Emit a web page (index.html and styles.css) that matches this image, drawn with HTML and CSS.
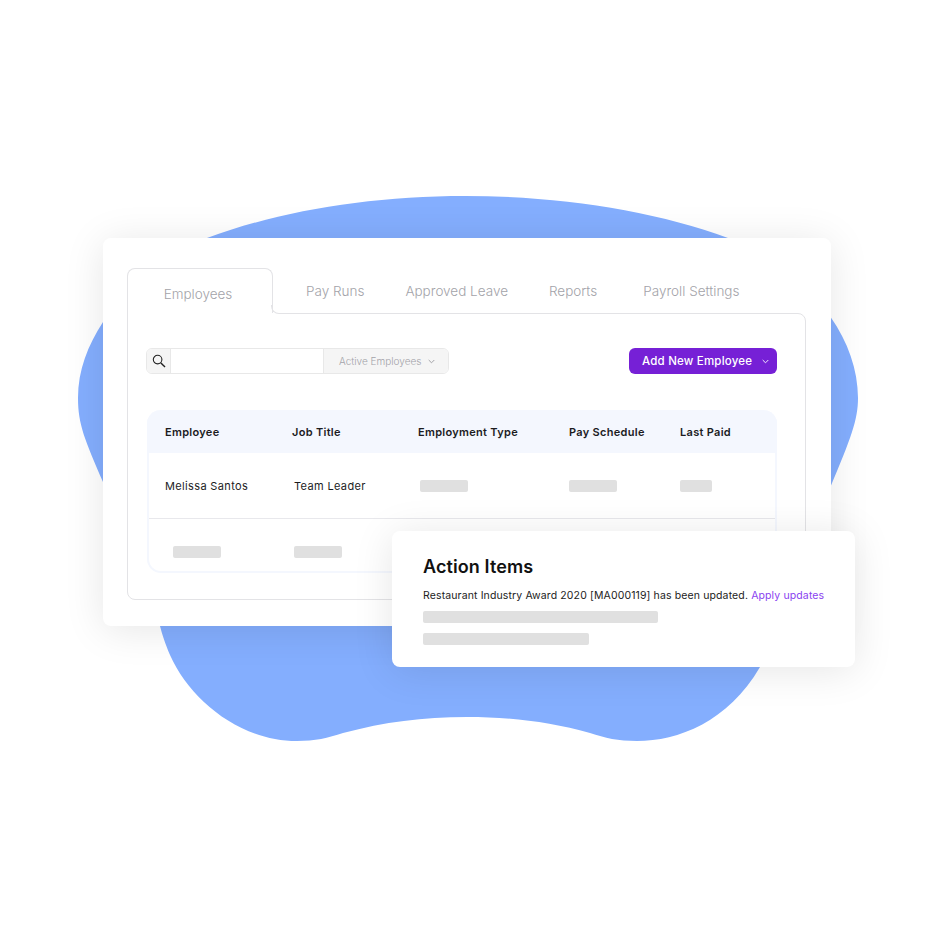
FILE: index.html
```html
<!DOCTYPE html>
<html>
  <head>
    <meta name="viewport" content="width=device-width, initial-scale=1.0" />
    <link rel="stylesheet" href="styles.css">
  </head>

  <body>
    <div class="stage">
      <svg class="blob" width="936" height="936" viewBox="0 0 936 936">
        <path d="M465 196 C560 196 655 211 728 238 C800 266 858 330 858 398 C858 420 851 438 830 488 C810 535 785 610 760 667 C728 722 678 741 637 741 C618 741 605 738 590 733 C550 722 510 717 467 717 C422 717 385 722 343 733 C328 738 315 741 297 741 C240 741 190 700 170 655 C165 643 162 634 160 626 C140 580 120 525 103 482 C85 440 78 425 78 398 C78 370 88 345 103 322 C125 285 165 255 207 238 C280 211 370 196 465 196 Z" fill="#84aefe"/>
      </svg>

      <div class="panel">
        <div class="tabs">
          <div class="tab tab-active">Employees</div>
          <div class="tab tab-first">Pay Runs</div>
          <div class="tab">Approved Leave</div>
          <div class="tab">Reports</div>
          <div class="tab tab-last">Payroll Settings</div>
        </div>

        <div class="tab-body">
          <div class="toolbar">
            <div class="search">
              <div class="search-icon">
                <svg width="14" height="14" viewBox="0 0 14 14">
                  <circle cx="5.6" cy="5.6" r="4.3" fill="none" stroke="#222" stroke-width="1.1"/>
                  <path d="M8.9 8.9 L13 13" fill="none" stroke="#222" stroke-width="1.4"/>
                </svg>
              </div>
              <div class="search-input"></div>
              <div class="search-filter">
                Active Employees
                <svg width="7" height="5" viewBox="0 0 7 5"><path d="M0.7 1 L3.5 3.8 L6.3 1" fill="none" stroke="#9a9a9f" stroke-width="0.9"/></svg>
              </div>
            </div>
            <div class="add-btn">
              Add New Employee
              <svg width="7" height="5" viewBox="0 0 7 5"><path d="M0.7 1 L3.5 3.8 L6.3 1" fill="none" stroke="#fff" stroke-width="0.9"/></svg>
            </div>
          </div>

          <div class="table">
            <div class="row row-head">
              <div>Employee</div>
              <div>Job Title</div>
              <div>Employment Type</div>
              <div>Pay Schedule</div>
              <div>Last Paid</div>
            </div>
            <div class="row row-first">
              <div>Melissa Santos</div>
              <div class="nudge">Team Leader</div>
              <div><div class="ph ph-48 nudge"></div></div>
              <div><div class="ph ph-48"></div></div>
              <div><div class="ph ph-32"></div></div>
            </div>
            <div class="row row-second">
              <div><div class="ph ph-48 nudge-more"></div></div>
              <div><div class="ph ph-48 nudge"></div></div>
            </div>
          </div>
        </div>
      </div>

      <div class="action-card">
        <h2 class="action-title">Action Items</h2>
        <p class="action-text">Restaurant Industry Award 2020 [MA000119] has been updated. <span class="action-link">Apply updates</span></p>
        <div class="ph ph-long"></div>
        <div class="ph ph-short"></div>
      </div>
    </div>
  </body>
</html>
```

FILE: styles.css
```css
* {
  box-sizing: border-box;
}

body {
  margin: 0;
  background-color: white;
  font-family: Inter, "Noto Sans", sans-serif;
}

.stage {
  position: relative;
  width: 936px;
  height: 936px;
  padding: 238px 105px 0 103px;
  overflow: hidden;
}

/*the blue shape sits behind everything:*/
.blob {
  position: absolute;
  top: 0;
  left: 0;
}

.panel {
  position: relative;
  height: 388px;
  padding: 30px 25px 0 24px;
  background-color: white;
  border-radius: 8px;
  box-shadow: 0 4px 40px rgba(0, 0, 0, 0.1);
}

/*tabs:*/
.tabs {
  display: flex;
  align-items: center;
  height: 45px;
  gap: 41px;
  color: #a3a3a9;
  font-size: 13.5px;
  font-weight: 300;
}

.tab {
  padding-top: 1px;
  white-space: nowrap;
}

.tab-active {
  position: relative;
  z-index: 1;
  align-self: stretch;
  width: 146px;
  height: 46px;
  padding: 17px 4px 0 0;
  text-align: center;
  background-color: white;
  border: 1px solid #e3e3e6;
  border-bottom: none;
  border-radius: 8px 8px 0 0;
}

/*hides the body's top border under the curve:*/
.tab-active:before {
  content: "";
  position: absolute;
  right: -8px;
  bottom: 0;
  width: 8px;
  height: 1px;
  background-color: white;
}

/*the small inward curve where the tab meets the body:*/
.tab-active:after {
  content: "";
  position: absolute;
  right: -8px;
  bottom: 0;
  width: 8px;
  height: 8px;
  border-left: 1px solid #e3e3e6;
  border-bottom: 1px solid #e3e3e6;
  border-bottom-left-radius: 8px;
}

.tab-first {
  margin-left: -8px;
}

.tab-last {
  margin-left: 5px;
}

.tab-body {
  height: 287px;
  padding: 34px 28px 0 18px;
  border: 1px solid #e3e3e6;
  border-radius: 0 8px 8px 8px;
}

/*search and button:*/
.toolbar {
  display: flex;
  justify-content: space-between;
  height: 26px;
}

.search {
  display: flex;
  width: 303px;
  background-color: white;
  border: 1px solid #e8e8e8;
  border-radius: 6px;
  overflow: hidden;
}

.search-icon {
  display: flex;
  align-items: center;
  justify-content: center;
  width: 24px;
  background-color: #f5f5f5;
  border-right: 1px solid #e8e8e8;
}

.search-input {
  width: 152px;
}

.search-filter {
  flex: 1;
  display: flex;
  align-items: center;
  gap: 7px;
  padding-left: 15px;
  background-color: #f5f5f5;
  border-left: 1px solid #e8e8e8;
  color: #a3a3a9;
  font-size: 10px;
  font-weight: 300;
  white-space: nowrap;
}

.add-btn {
  display: flex;
  align-items: center;
  gap: 10px;
  width: 148px;
  padding-left: 13px;
  background-color: #7620d6;
  border-radius: 6px;
  color: white;
  font-size: 11.5px;
  font-weight: 500;
  letter-spacing: 0.2px;
  white-space: nowrap;
}

/*table:*/
.table {
  width: 630px;
  height: 163px;
  margin: 36px 0 0 1px;
  border: 2px solid #f4f7fe;
  border-top: none;
  border-radius: 14px;
  font-size: 11px;
  color: #1c1c1e;
}

.row {
  display: grid;
  grid-template-columns: 127px 126px 151px 111px 1fr;
  align-items: center;
  padding-left: 16px;
}

.row-head {
  height: 43px;
  margin: 0 -2px;
  padding-left: 18px;
  background-color: #f4f7fe;
  border-radius: 14px 14px 0 0;
  font-weight: 600;
  letter-spacing: 0.3px;
}

.row-first {
  height: 66px;
  border-bottom: 1px solid #e8e8ec;
  letter-spacing: 0.35px;
}

.row-second {
  height: 53px;
  padding-top: 12px;
}

.nudge {
  margin-left: 2px;
}

.nudge-more {
  margin-left: 8px;
}

/*grey placeholder bars:*/
.ph {
  height: 12px;
  background-color: #e0e0e0;
  border-radius: 2px;
}

.ph-48 {
  width: 48px;
}

.ph-32 {
  width: 32px;
}

.ph-long {
  width: 235px;
  margin-top: 7px;
}

.ph-short {
  width: 166px;
  margin-top: 10px;
}

/*floating card:*/
.action-card {
  position: absolute;
  left: 392px;
  top: 531px;
  width: 463px;
  height: 136px;
  padding: 25px 31px 0;
  background-color: white;
  border-radius: 8px;
  box-shadow: 0 4px 40px rgba(0, 0, 0, 0.1);
}

.action-title {
  margin: 0;
  font-size: 18px;
  font-weight: 600;
  letter-spacing: 0.1px;
  line-height: 22px;
  color: #111;
}

.action-text {
  margin: 10px 0 0;
  font-size: 10.5px;
  letter-spacing: 0.125px;
  line-height: 16px;
  color: #222;
  white-space: nowrap;
}

.action-link {
  color: #8a3ff0;
}
```
